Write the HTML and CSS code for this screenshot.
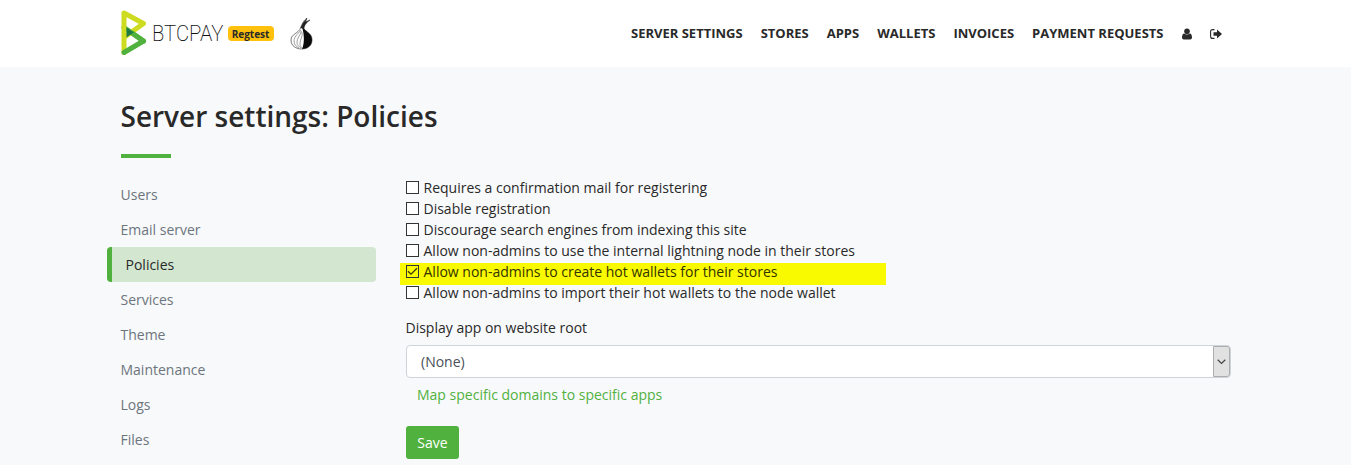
FILE: index.html
```html
<!DOCTYPE html>
<html lang="en">
<head>
<meta charset="utf-8">
<title>Server settings: Policies</title>
<link rel="stylesheet" href="styles.css">
</head>
<body>
<header class="topbar">
  <div class="container topbar-inner">
    <a class="brand">
      <svg class="logo" width="106" height="46" viewBox="0 0 106 46">
        <path d="M22.500 31L3 17.500" fill="none" stroke="#51b13e" stroke-width="5" stroke-linecap="round"/>
        <path d="M3 42.500V3L22.500 13.500L3 27.500" fill="none" stroke="#cedc21" stroke-width="5" stroke-linecap="round" stroke-linejoin="round"/>
        <path d="M3 42.500L22.500 31L11 23" fill="none" stroke="#51b13e" stroke-width="5" stroke-linecap="round" stroke-linejoin="round"/>
        <path d="M5.500 17.500V27.500L12.800 22.300Z" fill="#1e7a44"/>
        <text class="logo-text" x="31" y="30.500" textLength="71.500" lengthAdjust="spacingAndGlyphs">BTCPAY</text>
      </svg>
      <span class="badge">Regtest</span>
    </a>
    <svg class="tor" width="24" height="34" viewBox="0 0 24 34">
      <path d="M10.500 11C12 7 13 4 17 1L15.500 5L20 3C16 6 14 8 14 12C18 16 22 17 22 23C22 29 17 32 12 32C6 32 1 29 1 23C1 17 9 16 10.500 11Z" fill="#fff" stroke="#444" stroke-width=".7"/>
      <path d="M12 10C18 16 22 17 22 23C22 29 17 32 12 32C14.500 27 14.500 18 12 10Z" fill="#0a0a0a"/>
      <path d="M10.500 11Q12 6 17 1L15.500 5L20 3Q14 7 14 12Z" fill="#222"/>
      <path d="M11 13C7 18 4 20 4 24S7 30 9 31M11.500 14C10 19 7 21 7 25S9 29 11 31M12 15C13 20 10 22 10 26S11 29 12 31" fill="none" stroke="#777" stroke-width=".7"/>
    </svg>
    <nav class="menu">
      <a>SERVER SETTINGS</a><a>STORES</a><a>APPS</a><a>WALLETS</a><a>INVOICES</a><a>PAYMENT REQUESTS</a>
      <a class="ico"><svg width="10" height="12" viewBox="0 0 10 12"><circle cx="5" cy="3.200" r="2.800"/><path d="M2.300 5.400Q5 7.700 7.700 5.400Q10 5.700 10 9.500Q10 11.500 8.200 11.500H1.800Q0 11.500 0 9.500Q0 5.700 2.300 5.400Z"/></svg></a>
      <a class="ico"><svg width="12" height="12" viewBox="0 0 12 12"><path d="M4.500 1.600H2.600Q.6 1.600 .6 3.600V8.400Q.6 10.400 2.600 10.400H4.500" fill="none" stroke="#292929" stroke-width="1.100"/><path d="M3.500 4.200H7V1.500L12 6L7 10.500V7.800H3.500Z"/></svg></a>
    </nav>
  </div>
</header>
<main class="container">
  <h1>Server settings: Policies</h1>
  <div class="rule"></div>
  <div class="columns">
    <nav class="side">
      <a>Users</a><a>Email server</a><a class="active">Policies</a><a>Services</a><a>Theme</a><a>Maintenance</a><a>Logs</a><a>Files</a>
    </nav>
    <form class="policies">
      <label class="check"><i class="box"></i>Requires a confirmation mail for registering</label>
      <label class="check"><i class="box"></i>Disable registration</label>
      <label class="check"><i class="box"></i>Discourage search engines from indexing this site</label>
      <label class="check"><i class="box"></i>Allow non-admins to use the internal lightning node in their stores</label>
      <label class="check marked"><i class="box"><svg width="11" height="11" viewBox="0 0 11 11"><path d="M1 5.300L4 8.200L10 2.300" fill="none" stroke="#333300" stroke-width="1.200"/></svg></i>Allow non-admins to create hot wallets for their stores</label>
      <label class="check"><i class="box"></i>Allow non-admins to import their hot wallets to the node wallet</label>
      <div class="field-label">Display app on website root</div>
      <div class="select"><span>(None)</span><div class="arrow"><svg width="9" height="6" viewBox="0 0 9 6"><path d="M.7 .8L4.500 4.500L8.300 .8" fill="none" stroke="#444" stroke-width="1.200"/></svg></div></div>
      <a class="map">Map specific domains to specific apps</a>
      <button class="save" type="button">Save</button>
    </form>
  </div>
</main>
</body>
</html>
```
FILE: styles.css
```css
* { box-sizing: border-box; }
body { margin: 0; height: 465px; overflow: hidden; background: #f8f9fb; color: #292929; font: 14px/21px "Open Sans", sans-serif; }
.container { width: 1140px; margin: 0 auto; padding: 0 15px; }
.topbar { height: 67px; background: #fff; }
.topbar-inner { display: flex; align-items: center; height: 67px; }
.brand { display: flex; align-items: center; }
.logo { display: block; margin-top: -2px; overflow: visible; }
.logo-text { font: 200 22px Roboto, sans-serif; fill: #111; }
.badge { margin-left: 1px; width: 46px; height: 15px; border-radius: 4px; background: #ffc10b; font-size: 10px; font-weight: 700; line-height: 17px; text-align: center; }
.tor { margin-left: 16px; }
.menu { display: flex; align-items: center; margin-left: auto; padding-right: 9px; gap: 18px; font-size: 13px; font-weight: 700; }
.ico { display: flex; }
.ico svg { fill: #292929; }
h1 { margin: 0; padding-top: 32px; font-size: 28px; font-weight: 600; line-height: 34px; }
.rule { width: 50px; height: 4px; margin-top: 21px; background: #51b13e; }
.columns { display: flex; margin-top: 19px; }
.side { display: flex; flex-direction: column; width: 269px; margin-left: -14px; }
.side a { height: 35px; padding: 7px 14px; color: #6c757d; }
.side .active { border-left: 5px solid #51b13e; border-radius: 4px; background: #d2e6d0; color: #292929; }
.policies { width: 825px; margin-left: 30px; }
.check { display: flex; align-items: center; height: 21px; }
.box { display: block; width: 13px; height: 13px; margin-right: 5px; border: 1px solid #333; background: #fff; }
.box svg { display: block; }
.marked { width: 486px; height: 22px; margin: 2px 0 -3px -6px; padding: 0 0 5px 6px; background: #f9f900; color: #333300; }
.marked .box { background: transparent; }
.field-label { margin-top: 14px; }
.select { display: flex; justify-content: space-between; height: 33px; margin-top: 7px; border: 1px solid #ced4da; border-radius: 4px; background: #fff; color: #495057; }
.select span { padding: 5px 14.500px; }
.arrow { display: flex; align-items: center; justify-content: center; width: 17px; border: 1px solid #adadad; border-radius: 0 3px 3px 0; background: #e1e1e1; }
.map { display: block; margin: 6px 0 0 11.500px; color: #51b13e; }
.save { display: block; width: 53px; height: 33px; margin-top: 21px; padding: 0 0 0 1px; border: 0; border-radius: 3px; background: #51b13e; color: #fff; font: inherit; }
```
